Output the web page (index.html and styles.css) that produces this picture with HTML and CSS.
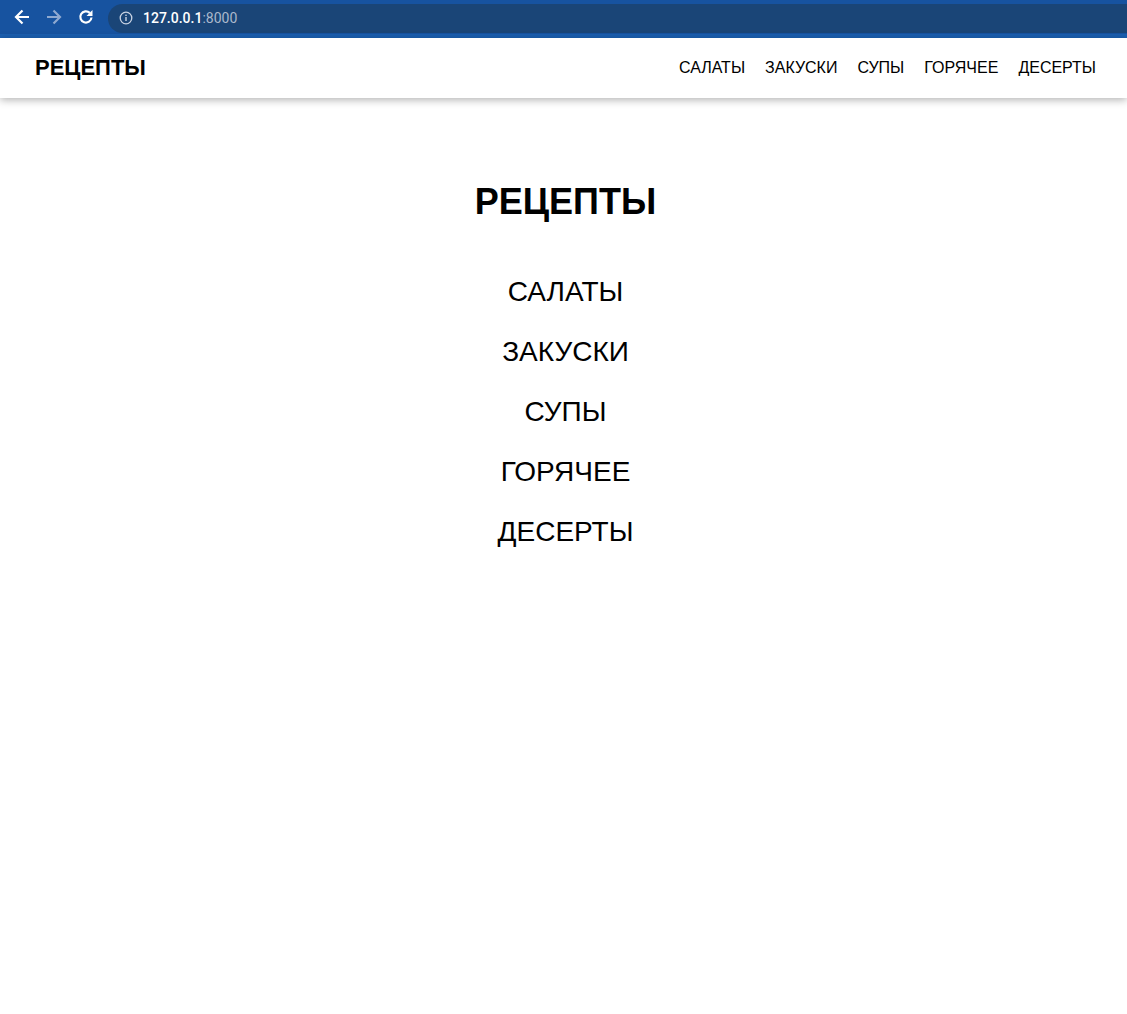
FILE: index.html
```html
<!DOCTYPE html>
<html lang="ru">
<head>
<meta charset="utf-8">
<title>Рецепты</title>
<link rel="stylesheet" href="styles.css">
</head>
<body>
<div class="chrome">
  <div class="chrome-btns">
    <svg class="ic" width="20" height="20" viewBox="0 0 20 20"><path d="M17 10H4.5M10.5 3.5L4 10l6.5 6.5" fill="none" stroke="#fff" stroke-width="2.2"/></svg>
    <svg class="ic" width="20" height="20" viewBox="0 0 20 20"><path d="M3 10h12.5M9.5 3.5L16 10l-6.5 6.5" fill="none" stroke="#8fa9d0" stroke-width="2.2"/></svg>
    <svg class="ic" width="20" height="20" viewBox="0 0 20 20"><path d="M15.5 10.5a5.6 5.6 0 1 1-1.7-4.6" fill="none" stroke="#fff" stroke-width="2.2"/><path d="M16.5 3v6h-6z" fill="#fff"/></svg>
  </div>
  <div class="omnibox">
    <svg width="14" height="14" viewBox="0 0 14 14"><circle cx="7" cy="7" r="5.8" fill="none" stroke="#c9d3e3" stroke-width="1.3"/><rect x="6.3" y="6" width="1.4" height="4" fill="#c9d3e3"/><rect x="6.3" y="3.6" width="1.4" height="1.4" fill="#c9d3e3"/></svg>
    <span class="url"><span class="host">127.0.0.1</span><span class="port">:8000</span></span>
  </div>
</div>
<header class="topbar">
  <a class="brand" href="#">РЕЦЕПТЫ</a>
  <nav class="nav">
    <a href="#">САЛАТЫ</a>
    <a href="#">ЗАКУСКИ</a>
    <a href="#">СУПЫ</a>
    <a href="#">ГОРЯЧЕЕ</a>
    <a href="#">ДЕСЕРТЫ</a>
  </nav>
</header>
<main class="main">
  <h1 class="title">РЕЦЕПТЫ</h1>
  <ul class="cats">
    <li><a href="#">САЛАТЫ</a></li>
    <li><a href="#">ЗАКУСКИ</a></li>
    <li><a href="#">СУПЫ</a></li>
    <li><a href="#">ГОРЯЧЕЕ</a></li>
    <li><a href="#">ДЕСЕРТЫ</a></li>
  </ul>
</main>
</body>
</html>
```
FILE: styles.css
```css
html, body { margin: 0; padding: 0; background: #fff; }
body { font-family: "Liberation Sans", Arial, sans-serif; color: #000; }
a { color: #000; text-decoration: none; }

.chrome {
  height: 34px;
  background: #1753a0;
  border-bottom: 4px solid #1b5fb0;
  display: flex;
  align-items: center;
}
.chrome-btns { display: flex; gap: 12px; padding-left: 12px; width: 96px; }
.ic { display: block; }
.omnibox {
  flex: 1;
  height: 29px;
  margin-top: 2px;
  background: #1a4577;
  border-radius: 15px 0 0 15px;
  display: flex;
  align-items: center;
  padding-left: 11px;
  gap: 10px;
  font-family: "Roboto", "Liberation Sans", sans-serif;
  font-size: 14px;
}
.host { color: #fff; font-weight: 500; }
.port { color: #aab8cc; }

.topbar {
  height: 60px;
  display: flex;
  align-items: center;
  justify-content: space-between;
  padding: 0 21px 0 35px;
  box-shadow: 0 2px 8px rgba(0,0,0,0.3);
  position: relative;
}
.brand { font-size: 22px; font-weight: bold; }
.nav { display: flex; }
.nav a { font-size: 16px; padding: 0 10px; }

.main { text-align: center; padding: 84px 0 0 4px; }
.title { font-size: 36px; font-weight: bold; margin: 0 0 54px; line-height: 40px; }
.cats { list-style: none; margin: 0; padding: 0; }
.cats li { font-size: 28px; line-height: 32px; margin-bottom: 28px; }
```
